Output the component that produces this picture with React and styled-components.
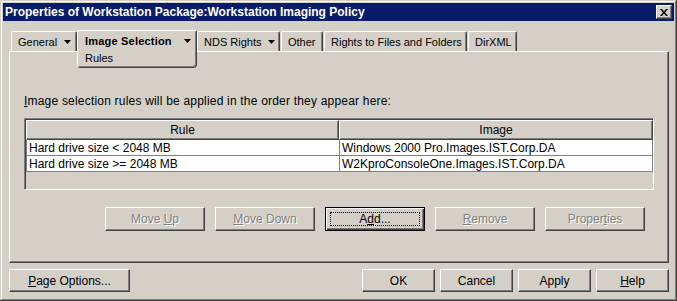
import React from 'react'
import styled, { createGlobalStyle } from 'styled-components'

const GlobalStyle = createGlobalStyle`
  html, body {
    margin: 0;
    padding: 0;
    background: #d4d0c8;
  }
  body {
    font-family: "Liberation Sans", Arial, sans-serif;
    font-size: 11px;
    color: #000;
  }
`

const raised = `
  border-top: 1px solid #fff;
  border-left: 1px solid #fff;
  border-right: 1px solid #404040;
  border-bottom: 1px solid #404040;
  box-shadow: inset -1px -1px #808080;
`

const Window = styled.div`
  box-sizing: border-box;
  width: 677px;
  height: 301px;
  padding: 3px;
  background: #d4d0c8;
  box-shadow: inset -1px -1px #404040, inset 1px 1px #d4d0c8,
    inset -2px -2px #808080, inset 2px 2px #fff;
  display: flex;
  flex-direction: column;
`

const TitleBar = styled.div`
  height: 18px;
  background: #081c6a;
  display: flex;
  align-items: center;
  justify-content: space-between;
  padding: 0 2px;
`

const Title = styled.span`
  color: #fff;
  font-family: "Liberation Sans", Arial, sans-serif;
  font-weight: bold;
  font-size: 12px;
`

const CloseButton = styled.div`
  box-sizing: border-box;
  width: 16px;
  height: 14px;
  background: #d4d0c8;
  ${raised}
  display: flex;
  align-items: center;
  justify-content: center;
`

const Content = styled.div`
  display: flex;
  flex-direction: column;
  padding: 0 5px 0 6px;
`

const TabStrip = styled.div`
  height: 21px;
  margin-top: 9px;
  padding-left: 2px;
  display: flex;
  align-items: flex-end;
`

const Tab = styled.div`
  box-sizing: border-box;
  width: ${(p) => p.w}px;
  height: 20px;
  border-top: 1px solid #fff;
  border-left: 1px solid #fff;
  border-right: 1px solid #404040;
  box-shadow: inset -1px 0 #808080;
  border-radius: 2px 2px 0 0;
  padding-left: 6px;
  display: flex;
  align-items: center;
  gap: 7px;
  margin-right: ${(p) => p.gap || 0}px;
  white-space: nowrap;
`

const ActiveTab = styled.div`
  box-sizing: border-box;
  position: relative;
  z-index: 2;
  align-self: flex-start;
  width: ${(p) => p.w}px;
  height: 38px;
  background: #d4d0c8;
  border-top: 1px solid #fff;
  border-left: 1px solid #fff;
  border-right: 1px solid #404040;
  border-bottom: 1px solid #404040;
  box-shadow: inset -1px -1px #808080;
  border-radius: 2px 2px 4px 4px;
  padding: 3px 0 0 7px;
  display: flex;
  flex-direction: column;
  gap: 3px;
`

const TabLabel = styled.div`
  display: flex;
  align-items: center;
  gap: 12px;
  font-weight: bold;
  font-size: 11px;
  letter-spacing: 0.2px;
  height: 14px;
`

const SubItem = styled.div`
  font-size: 11px;
  margin-top: 1px;
`

const Panel = styled.div`
  box-sizing: border-box;
  height: 212px;
  ${raised}
  padding: 0 14px;
  display: flex;
  flex-direction: column;
`

const Instruction = styled.div`
  margin-top: 43px;
  line-height: 13px;
  font-size: 12px;
  letter-spacing: 0.2px;
`

const Table = styled.div`
  box-sizing: border-box;
  margin-top: 10px;
  height: 72px;
  border-top: 1px solid #808080;
  border-left: 1px solid #808080;
  border-right: 1px solid #fff;
  border-bottom: 1px solid #fff;
  box-shadow: inset 1px 1px #404040;
  padding: 1px 0 0 1px;
  display: grid;
  grid-template-columns: 313px 1fr;
  grid-template-rows: 20px 16px 16px;
`

const HeaderCell = styled.div`
  box-sizing: border-box;
  ${raised}
  display: flex;
  align-items: center;
  justify-content: center;
  font-size: 12px;
`

const Cell = styled.div`
  box-sizing: border-box;
  background: #fff;
  border-bottom: 1px solid #808080;
  border-left: 1px solid #808080;
  border-right: ${(p) => (p.last ? '1px solid #808080' : 'none')};
  padding-left: 2px;
  display: flex;
  align-items: center;
  font-size: 12px;
  white-space: nowrap;
`

const ActionRow = styled.div`
  margin-top: 17px;
  padding-right: 9px;
  display: flex;
  justify-content: flex-end;
  gap: 10px;
`

const Button = styled.div`
  box-sizing: border-box;
  width: ${(p) => p.w}px;
  height: ${(p) => p.h}px;
  background: #d4d0c8;
  ${raised}
  display: flex;
  align-items: center;
  justify-content: center;
  font-size: 12px;
  color: ${(p) => (p.disabled ? '#808080' : '#000')};
  text-shadow: ${(p) => (p.disabled ? '1px 1px 0 #fff' : 'none')};
  ${(p) =>
    p.isDefault &&
    `
    border: 1px solid #000;
    box-shadow: inset 1px 1px #fff, inset -1px -1px #404040, inset -2px -2px #808080;
  `}
`

const FocusRing = styled.div`
  box-sizing: border-box;
  width: calc(100% - 8px);
  height: calc(100% - 8px);
  border: 1px dotted #000;
  display: flex;
  align-items: center;
  justify-content: center;
`

const Footer = styled.div`
  margin-top: 6px;
  display: flex;
  justify-content: space-between;
`

const ButtonGroup = styled.div`
  display: flex;
  gap: 5px;
`

const Key = styled.span`
  text-decoration: underline;
`

function Arrow() {
  return (
    <svg width="7" height="4" viewBox="0 0 7 4">
      <path d="M0 0h7L3.5 4z" fill="#000" />
    </svg>
  )
}

function CloseGlyph() {
  return (
    <svg width="8" height="7" viewBox="0 0 8 7">
      <path d="M0 0h2l2 2.5L6 0h2L5 3.5 8 7H6L4 4.5 2 7H0l3-3.5z" fill="#000" />
    </svg>
  )
}

export default function App() {
  return (
    <>
      <GlobalStyle />
      <Window>
        <TitleBar>
          <Title>Properties of Workstation Package:Workstation Imaging Policy</Title>
          <CloseButton>
            <CloseGlyph />
          </CloseButton>
        </TitleBar>
        <Content>
          <TabStrip>
            <Tab w={66}>
              General <Arrow />
            </Tab>
            <ActiveTab w={120}>
              <TabLabel>
                Image Selection <Arrow />
              </TabLabel>
              <SubItem>Rules</SubItem>
            </ActiveTab>
            <Tab w={83} gap={1}>
              NDS Rights <Arrow />
            </Tab>
            <Tab w={42} gap={1}>Other</Tab>
            <Tab w={143} gap={1}>Rights to Files and Folders</Tab>
            <Tab w={49}>DirXML</Tab>
          </TabStrip>
          <Panel>
            <Instruction>
              <Key>I</Key>mage selection rules will be applied in the order they appear here:
            </Instruction>
            <Table>
              <HeaderCell>Rule</HeaderCell>
              <HeaderCell>Image</HeaderCell>
              <Cell>Hard drive size &lt; 2048 MB</Cell>
              <Cell last>Windows 2000 Pro.Images.IST.Corp.DA</Cell>
              <Cell>Hard drive size &gt;= 2048 MB</Cell>
              <Cell last>W2KproConsoleOne.Images.IST.Corp.DA</Cell>
            </Table>
            <ActionRow>
              <Button w={100} h={24} disabled>
                Move&nbsp;<Key>U</Key>p
              </Button>
              <Button w={100} h={24} disabled>
                <Key>M</Key>ove Down
              </Button>
              <Button w={100} h={24} isDefault>
                <FocusRing>
                  A<Key>d</Key>d...
                </FocusRing>
              </Button>
              <Button w={100} h={24} disabled>
                <Key>R</Key>emove
              </Button>
              <Button w={100} h={24} disabled>
                Proper<Key>t</Key>ies
              </Button>
            </ActionRow>
          </Panel>
          <Footer>
            <Button w={121} h={23}>
              <Key>P</Key>age Options...
            </Button>
            <ButtonGroup>
              <Button w={73} h={23}>OK</Button>
              <Button w={73} h={23}>Cancel</Button>
              <Button w={73} h={23}>Apply</Button>
              <Button w={73} h={23}>
                <Key>H</Key>elp
              </Button>
            </ButtonGroup>
          </Footer>
        </Content>
      </Window>
    </>
  )
}
